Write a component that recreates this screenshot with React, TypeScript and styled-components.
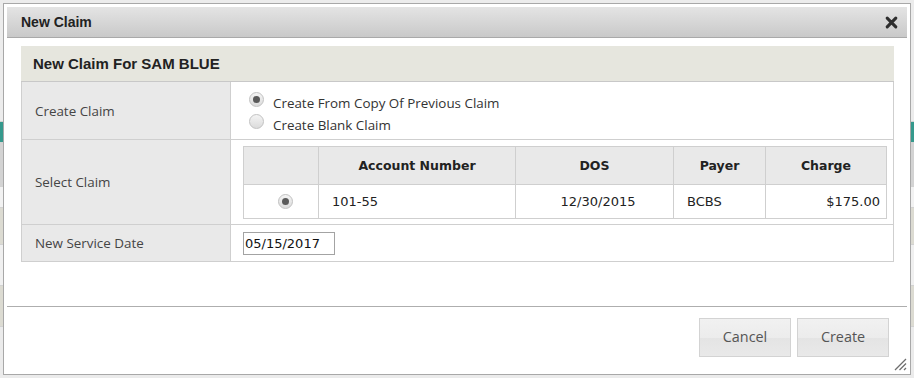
import React from "react";
import styled, { createGlobalStyle } from "styled-components";

const GlobalStyle = createGlobalStyle`
  html, body { margin: 0; padding: 0; }
  body {
    background: #e8e8e8;
    font-family: "Open Sans", "Liberation Sans", sans-serif;
  }
`;

const Page = styled.div`
  position: relative;
  width: 914px;
  height: 378px;
  overflow: hidden;
`;

const Backdrop = styled.div`
  display: flex;
  flex-direction: column;
  height: 100%;
`;

const Band = styled.div<{ $h: number; $bg: string }>`
  flex-shrink: 0;
  height: ${(p) => p.$h}px;
  background: ${(p) => p.$bg};
  border-bottom: 1px solid #d2d2d2;
`;

const Dialog = styled.div`
  position: absolute;
  left: 3px;
  top: 3px;
  width: 908px;
  height: 372px;
  box-sizing: border-box;
  border: 1px solid #a8a8a8;
  background: #fff;
  padding: 3px;
  display: flex;
  flex-direction: column;
`;

const TitleBar = styled.div`
  flex-shrink: 0;
  height: 31px;
  box-sizing: border-box;
  display: flex;
  align-items: center;
  justify-content: space-between;
  padding: 0 9px 0 14px;
  background: linear-gradient(#e4e4e4, #c9c9c9);
  border-bottom: 1px solid #a9a9a9;
`;

const Title = styled.span`
  font: bold 14px "Liberation Sans", Arial, sans-serif;
  color: #222;
`;

const CloseButton = styled.button`
  border: 0;
  background: none;
  padding: 0;
  width: 13px;
  height: 13px;
  display: flex;
  cursor: pointer;
`;

const Body = styled.div`
  flex: 1;
  padding: 8px 13px 0 14px;
`;

const PanelHeader = styled.h2`
  margin: 0;
  height: 36px;
  box-sizing: border-box;
  display: flex;
  align-items: center;
  padding-left: 12px;
  background: #e6e6de;
  border-bottom: 1px solid #c8c8c8;
  font: bold 15px "Liberation Sans", Arial, sans-serif;
  color: #222;
`;

const FormGrid = styled.div`
  display: grid;
  grid-template-columns: 209px minmax(0, 1fr);
  grid-template-rows: 58px 85px 37px;
  border-left: 1px solid #cfcfcf;
  border-right: 1px solid #cfcfcf;
`;

const LabelCell = styled.div`
  box-sizing: border-box;
  background: #e9e9e9;
  border-right: 1px solid #cfcfcf;
  border-bottom: 1px solid #cfcfcf;
  display: flex;
  align-items: center;
  padding-left: 13px;
  font-size: 13.4px;
  color: #454545;
`;

const ValueCell = styled.div`
  box-sizing: border-box;
  border-bottom: 1px solid #cfcfcf;
  padding: 6px 0 0 12px;
`;

const Option = styled.label`
  height: 22px;
  display: flex;
  align-items: center;
  gap: 9px;
  padding-left: 6px;
  font-size: 13.4px;
  color: #333;
`;

const OptionText = styled.span`
  padding-top: 7px;
`;

const Radio = styled.span<{ $checked?: boolean }>`
  flex-shrink: 0;
  width: 15px;
  height: 15px;
  box-sizing: border-box;
  border-radius: 50%;
  border: 1px solid #c2c2c2;
  background: linear-gradient(#f4f4f4, #dbdbdb);
  display: inline-flex;
  align-items: center;
  justify-content: center;
  &::after {
    content: "";
    width: 7px;
    height: 7px;
    border-radius: 50%;
    background: #5a5a5a;
    display: ${(p) => (p.$checked ? "block" : "none")};
  }
`;

const ClaimsTable = styled.table`
  border-collapse: collapse;
  table-layout: fixed;
  width: 644px;
  font-family: "DejaVu Sans", Verdana, sans-serif;
  font-size: 13px;
  color: #222;
  border: 1px solid #cfcfcf;
`;

const HeadRow = styled.tr`
  height: 38px;
  background: #e9e9e9;
`;

const BodyRow = styled.tr`
  height: 34px;
  background: #fff;
`;

const Th = styled.th`
  border: 1px solid #cfcfcf;
  padding: 0;
  font-weight: bold;
  font-size: 12.5px;
  color: #222;
  text-align: center;
`;

const cellPadding = {
  left: "0 12px 0 13px",
  center: "0 6px 0 13px",
  right: "0 6px 0 13px",
};

const Td = styled.td<{ $align?: "left" | "center" | "right" }>`
  border: 1px solid #cfcfcf;
  padding: ${(p) => cellPadding[p.$align ?? "left"]};
  text-align: ${(p) => p.$align ?? "left"};
`;

const RadioCell = styled.td`
  border: 1px solid #cfcfcf;
  padding: 0 0 0 8px;
  text-align: center;
  line-height: 0;
`;

const DateInput = styled.input`
  width: 92px;
  height: 23px;
  box-sizing: border-box;
  border: 1px solid #a3a3a3;
  padding: 0 1px;
  margin: 0;
  font: 13px "DejaVu Sans", Verdana, sans-serif;
  color: #111;
  outline: none;
`;

const Footer = styled.div`
  flex-shrink: 0;
  height: 65px;
  box-sizing: border-box;
  border-top: 1px solid #aeaeae;
  display: flex;
  justify-content: flex-end;
  align-items: flex-start;
  gap: 6px;
  padding: 11px 18px 0 0;
`;

const Button = styled.button`
  width: 92px;
  height: 39px;
  box-sizing: border-box;
  border: 1px solid #d3d3d3;
  border-radius: 0;
  padding: 0 0 2px;
  background: linear-gradient(#f1f1f1 0%, #ececec 50%, #e4e4e4 52%, #e9e9e9 100%);
  font: 14.4px "Open Sans", "Liberation Sans", sans-serif;
  color: #555;
  cursor: pointer;
`;

const Grip = styled.svg`
  position: absolute;
  right: 3px;
  bottom: 3px;
`;

export default function App() {
  return (
    <>
      <GlobalStyle />
      <Page>
        <Backdrop>
          <Band $h={121} $bg="#ececec" />
          <Band $h={20} $bg="#35998d" />
          <Band $h={43} $bg="#d3d3d3" />
          <Band $h={20} $bg="#f2f2f2" />
          <Band $h={36} $bg="#dcdbd2" />
          <Band $h={40} $bg="#f0f0f0" />
          <Band $h={40} $bg="#dcdbd2" />
          <Band $h={60} $bg="#ebebeb" />
        </Backdrop>
        <Dialog role="dialog" aria-label="New Claim">
          <TitleBar>
            <Title>New Claim</Title>
            <CloseButton aria-label="Close">
              <svg width="13" height="13" viewBox="0 0 13 13">
                <path
                  d="M2.2 2.2 L10.8 10.8 M10.8 2.2 L2.2 10.8"
                  stroke="#2e2e2e"
                  strokeWidth="3.1"
                  strokeLinecap="round"
                />
              </svg>
            </CloseButton>
          </TitleBar>
          <Body>
            <PanelHeader>New Claim For SAM BLUE</PanelHeader>
            <FormGrid>
              <LabelCell>Create Claim</LabelCell>
              <ValueCell>
                <Option>
                  <Radio $checked role="radio" aria-checked="true" />
                  <OptionText>Create From Copy Of Previous Claim</OptionText>
                </Option>
                <Option>
                  <Radio role="radio" aria-checked="false" />
                  <OptionText>Create Blank Claim</OptionText>
                </Option>
              </ValueCell>

              <LabelCell>Select Claim</LabelCell>
              <ValueCell>
                <ClaimsTable>
                  <colgroup>
                    <col style={{ width: 75 }} />
                    <col style={{ width: 197 }} />
                    <col style={{ width: 158 }} />
                    <col style={{ width: 92 }} />
                    <col style={{ width: 121 }} />
                  </colgroup>
                  <thead>
                    <HeadRow>
                      <Th />
                      <Th>Account Number</Th>
                      <Th>DOS</Th>
                      <Th>Payer</Th>
                      <Th>Charge</Th>
                    </HeadRow>
                  </thead>
                  <tbody>
                    <BodyRow>
                      <RadioCell>
                        <Radio $checked role="radio" aria-checked="true" />
                      </RadioCell>
                      <Td>101-55</Td>
                      <Td $align="center">12/30/2015</Td>
                      <Td>BCBS</Td>
                      <Td $align="right">$175.00</Td>
                    </BodyRow>
                  </tbody>
                </ClaimsTable>
              </ValueCell>

              <LabelCell>New Service Date</LabelCell>
              <ValueCell>
                <DateInput defaultValue="05/15/2017" />
              </ValueCell>
            </FormGrid>
          </Body>
          <Footer>
            <Button>Cancel</Button>
            <Button>Create</Button>
          </Footer>
          <Grip width="14" height="14" viewBox="0 0 14 14">
            <path
              d="M13 2 L2 13 M13 6.5 L6.5 13 M13 11 L11 13"
              stroke="#6e6e6e"
              strokeWidth="1.3"
            />
          </Grip>
        </Dialog>
      </Page>
    </>
  );
}
